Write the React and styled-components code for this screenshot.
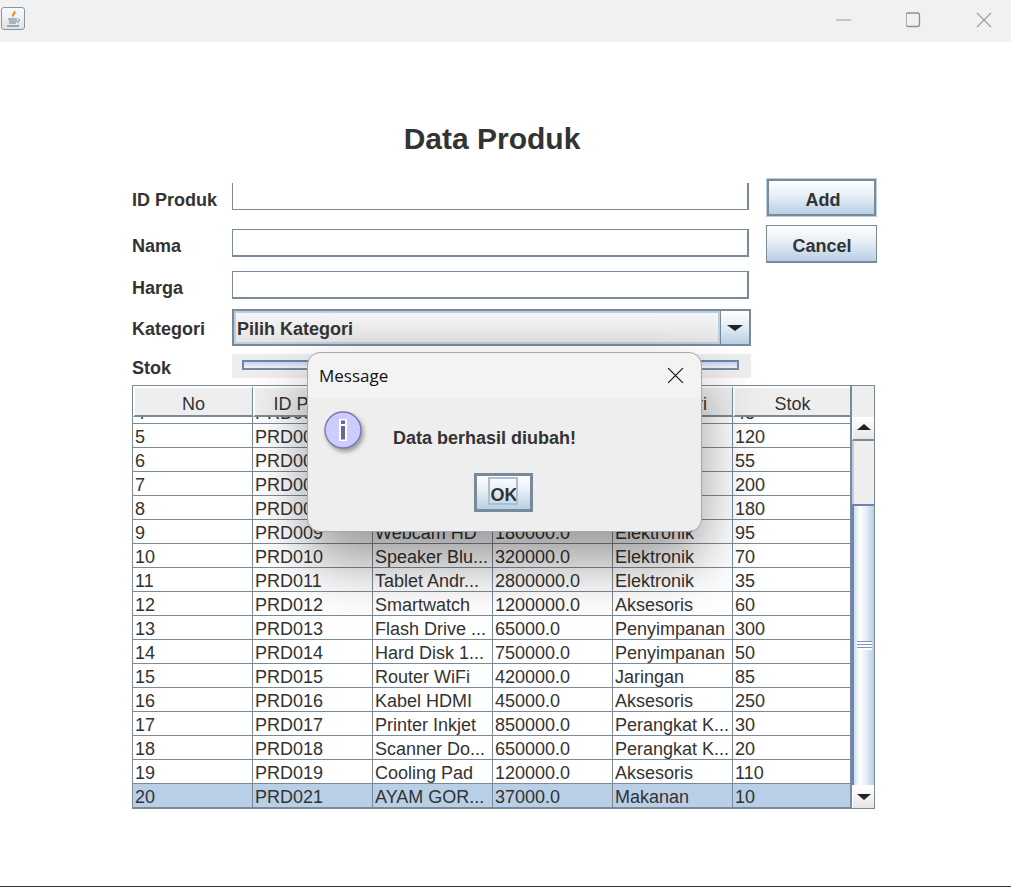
import React from "react";
import styled, { createGlobalStyle } from "styled-components";

const Global = createGlobalStyle`
  html, body { margin: 0; padding: 0; background: #fff; }
  * { box-sizing: border-box; }
`;

const SANS = `"Liberation Sans", Arial, sans-serif`;
const LINE = "#7a8a99";
const INK = "#333333";
const METAL = "linear-gradient(180deg, #ffffff 0%, #e6eef6 45%, #b8cfe5 100%)";

const Frame = styled.div`
  position: relative;
  width: 1011px;
  height: 887px;
  overflow: hidden;
  background: #fff;
  border-bottom: 1px solid #333;
  font-family: ${SANS};
  color: ${INK};
`;
const TitleBar = styled.div`
  height: 42px;
  background: #f1f1f1;
  display: flex;
  align-items: center;
  padding: 0 19px 0 1px;
`;
const AppIcon = styled.div`
  width: 24px;
  height: 23px;
  margin-top: -5px;
  border: 1px solid #7f98ad;
  border-radius: 3px;
  background: linear-gradient(180deg, #fbfbfb, #dfe3e6);
  display: flex;
  align-items: center;
  justify-content: center;
`;
const WinButtons = styled.div`
  margin-left: auto;
  display: flex;
  align-items: center;
  gap: 54px;
  margin-top: -3px;
`;
const Main = styled.div`
  width: 743px;
  margin-left: 132px;
`;
const Title = styled.h1`
  margin: 79px 0 0;
  height: 36px;
  font-size: 30px;
  line-height: 36px;
  font-weight: 700;
  text-align: center;
  color: ${INK};
  padding-right: 23px;
`;
const Form = styled.div`
  margin-top: 22px;
  display: grid;
  grid-template-columns: 100px 534px 1fr;
  grid-template-rows: 46px 41px 43px 45px 31px;
  align-items: start;
`;
const Label = styled.div`
  font-size: 18px;
  font-weight: 700;
  line-height: 20px;
  margin-top: ${p => p.$top}px;
`;
const TextField = styled.div`
  width: 517px;
  height: ${p => p.$open ? 27 : 28}px;
  margin-top: ${p => p.$top}px;
  border-style: solid;
  border-color: ${LINE};
  border-width: ${p => p.$open ? "0 2px 1px 1px" : "1px 2px 2px 1px"};
`;
const AddButton = styled.button`
  height: 37px;
  width: 109px;
  margin: 0 0 0 1px;
  font: 700 18px ${SANS};
  color: ${INK};
  background: ${METAL};
  border: 2px solid ${LINE};
  box-shadow: 0 0 0 1px #b8cfe5;
  padding: 5px 0 0 3px;
`;
const CancelButton = styled.button`
  height: 38px;
  width: 111px;
  margin: 0;
  font: 700 18px ${SANS};
  color: ${INK};
  background: ${METAL};
  border: 1px solid ${LINE};
  border-bottom-width: 2px;
  padding: 5px 0 0 1px;
`;
const Combo = styled.div`
  grid-column: 2 / 4;
  width: 519px;
  height: 37px;
  border: 2px solid ${LINE};
  display: flex;
`;
const ComboValue = styled.div`
  flex: 1;
  border: 2px solid #b8cfe5;
  background: linear-gradient(180deg, #f6f6f6, #e4e4e4);
  font-size: 18px;
  font-weight: 700;
  line-height: 33px;
  padding-left: 1px;
`;
const ComboArrow = styled.div`
  width: 29px;
  border-left: 1px solid ${LINE};
  background: ${METAL};
  display: flex;
  align-items: center;
  justify-content: center;
`;
const Triangle = styled.div`
  width: 0;
  height: 0;
  border-left: ${p => p.$w}px solid transparent;
  border-right: ${p => p.$w}px solid transparent;
  border-${p => p.$up ? "bottom" : "top"}: ${p => Math.round(p.$w * 0.8)}px solid #222;
`;
const SliderWrap = styled.div`
  grid-column: 2 / 4;
  width: 519px;
  height: 24px;
  background: #eeeeee;
  padding: 6px 12px 0 10px;
`;
const SliderTrack = styled.div`
  height: 10px;
  border: 2px solid ${LINE};
  border-top-color: #6b83b0;
  border-left-color: #6b83b0;
  background: linear-gradient(180deg, #c5d5ea, #f0f4f9);
`;
const Table = styled.div`
  height: 424px;
  border: 1px solid ${LINE};
  display: grid;
  grid-template-columns: 719px 1fr;
  grid-template-rows: 31px 1fr;
`;
const Head = styled.div`
  display: grid;
  grid-template-columns: 120px 120px 120px 120px 120px 117px;
  background: #fff;
  border-right: 2px solid ${LINE};
`;
const HeadCell = styled.div`
  height: 31px;
  font-size: 18px;
  line-height: 29px;
  padding-top: 2px;
  text-align: center;
  background: #eeeeee;
  border-style: solid;
  border-color: #fff ${LINE} ${LINE} #fff;
  border-width: 2px 1px 2px 2px;
  &:last-child { border-right: 0; }
`;
const Corner = styled.div`
  background: #eeeeee;
`;
const Rows = styled.div`
  height: 391px;
  overflow: hidden;
  display: flex;
  flex-direction: column;
  justify-content: flex-end;
  border-right: 2px solid ${LINE};
`;
const Row = styled.div`
  flex: none;
  height: 24px;
  display: grid;
  grid-template-columns: 120px 120px 120px 120px 120px 117px;
  border-bottom: 1px solid ${LINE};
  background: ${p => p.$selected ? "#b8cfe5" : "#fff"};
`;
const Cell = styled.div`
  font-size: 18px;
  line-height: 27px;
  padding-left: 2px;
  border-right: 1px solid ${LINE};
  white-space: nowrap;
  overflow: hidden;
  &:last-child { border-right: 0; }
`;
const ScrollBar = styled.div`
  display: flex;
  flex-direction: column;
`;
const ScrollButton = styled.div`
  height: ${p => p.$up ? 24 : 23}px;
  flex: none;
  padding-bottom: 2px;
  background: linear-gradient(180deg, #fff, #e6e6e6);
  border-left: 1px solid #fff;
  border-${p => p.$up ? "bottom" : "top"}: 2px solid ${p => p.$up ? LINE : "#fff"};
  display: flex;
  align-items: center;
  justify-content: center;
`;
const Track = styled.div`
  flex: 1;
  display: flex;
  flex-direction: column;
`;
const TrackTop = styled.div`
  height: 63px;
  flex: none;
  background: #eeeeee;
  border-left: 2px solid #b8cfe5;
`;
const Thumb = styled.div`
  flex: 1;
  border-top: 2px solid #6b83b0;
  border-left: 2px solid #6b83b0;
  background: linear-gradient(90deg, #cfdeee 0%, #ffffff 30%, #e6eef6 60%, #b8cfe5 100%);
  display: flex;
  align-items: center;
  justify-content: center;
`;
const Grip = styled.div`
  width: 15px;
  height: 9px;
  background: repeating-linear-gradient(180deg, #7c96c4 0 1px, #fff 1px 3px);
`;

const DialogShadow = styled.div`
  position: absolute;
  left: 308px;
  top: 353px;
  width: 393px;
  height: 178px;
  border-radius: 12px;
  box-shadow: 0 30px 60px rgba(0, 0, 0, 0.42);
`;
const Dialog = styled.div`
  position: absolute;
  left: 308px;
  top: 353px;
  width: 393px;
  height: 178px;
  border-radius: 12px;
  overflow: hidden;
  background: #eeeeee;
  outline: 1px solid #a8a8a8;
`;
const DialogTitle = styled.div`
  height: 44px;
  background: #f3f3f3;
  display: flex;
  align-items: center;
  justify-content: space-between;
  padding: 0 17px 0 11px;
  font: 400 17px "Open Sans", "Noto Sans", sans-serif;
  color: #111;
`;
const DialogBody = styled.div`
  display: grid;
  grid-template-columns: 69px 1fr;
  padding: 14px 0 0 16px;
`;
const InfoIcon = styled.div`
  width: 40px;
  height: 40px;
`;
const Message = styled.div`
  font-size: 18px;
  font-weight: 700;
  line-height: 20px;
  padding-top: 17px;
`;
const OkRow = styled.div`
  display: flex;
  justify-content: center;
  margin-top: 22px;
  padding-right: 3px;
`;
const OkButton = styled.button`
  width: 59px;
  height: 39px;
  padding: 0;
  border: 3px solid ${LINE};
  background: ${METAL};
  font: 700 18px ${SANS};
  color: ${INK};
  display: flex;
  align-items: center;
  justify-content: center;
`;
const OkLabel = styled.span`
  display: block;
  border: 2px solid #a9bfd4;
  width: 30px;
  height: 28px;
  line-height: 32px;
  margin: -3px 0 0 -1px;
  padding-left: 1px;
  text-align: left;
  overflow: hidden;
`;

const columns = ["No", "ID Produk", "Nama Produk", "Harga", "Kategori", "Stok"];
const data = [
  ["4", "PRD004", "Monitor LED", "1500000.0", "Elektronik", "45"],
  ["5", "PRD005", "Headset Ga...", "450000.0", "Aksesoris", "120"],
  ["6", "PRD006", "SSD 512GB", "850000.0", "Aksesoris", "55"],
  ["7", "PRD007", "RAM 8GB", "500000.0", "Komponen", "200"],
  ["8", "PRD008", "Mousepad", "90000.0", "Aksesoris", "180"],
  ["9", "PRD009", "Webcam HD", "180000.0", "Elektronik", "95"],
  ["10", "PRD010", "Speaker Blu...", "320000.0", "Elektronik", "70"],
  ["11", "PRD011", "Tablet Andr...", "2800000.0", "Elektronik", "35"],
  ["12", "PRD012", "Smartwatch", "1200000.0", "Aksesoris", "60"],
  ["13", "PRD013", "Flash Drive ...", "65000.0", "Penyimpanan", "300"],
  ["14", "PRD014", "Hard Disk 1...", "750000.0", "Penyimpanan", "50"],
  ["15", "PRD015", "Router WiFi", "420000.0", "Jaringan", "85"],
  ["16", "PRD016", "Kabel HDMI", "45000.0", "Aksesoris", "250"],
  ["17", "PRD017", "Printer Inkjet", "850000.0", "Perangkat K...", "30"],
  ["18", "PRD018", "Scanner Do...", "650000.0", "Perangkat K...", "20"],
  ["19", "PRD019", "Cooling Pad", "120000.0", "Aksesoris", "110"],
  ["20", "PRD021", "AYAM GOR...", "37000.0", "Makanan", "10"],
];

const JavaLogo = () => (
  <svg width="17" height="19" viewBox="0 0 17 19" fill="none">
    <path d="M9 1C10 3 7 4 7 6C7 7 8 8 8.5 8.5C8 7 9.5 6 10.5 4.5C11 3.5 10 2 9 1Z" fill="#ef8a2a" />
    <path d="M3 10h9M4 12h8M4 14h7M13 10c2 0 2 3-1 3" stroke="#66808f" strokeWidth="1" />
    <path d="M2 17h12" stroke="#66808f" strokeWidth="1.2" />
  </svg>
);

const MinIcon = () => (
  <svg width="16" height="16" viewBox="0 0 16 16"><path d="M0 8h15" stroke="#9a9a9a" strokeWidth="1" /></svg>
);
const MaxIcon = () => (
  <svg width="16" height="16" viewBox="0 0 16 16" fill="none"><rect x="0" y="1" width="13.5" height="13.5" rx="2" stroke="#8f8f8f" strokeWidth="1.3" /></svg>
);
const CloseIcon = ({ color = "#9a9a9a", size = 16 }) => (
  <svg width={size} height={size} viewBox="0 0 16 16"><path d="M1 1l14 14M15 1L1 15" stroke={color} strokeWidth="1.1" /></svg>
);
const Info = () => (
  <svg width="44" height="44" viewBox="0 0 44 44" style={{ filter: "drop-shadow(2px 3px 2px rgba(0,0,0,.35))" }}>
    <circle cx="19" cy="19" r="18" fill="#ccccff" stroke="#7b75b0" strokeWidth="1.4" />
    <rect x="15" y="8" width="8" height="22" fill="#fff" />
    <rect x="17" y="9.5" width="4" height="3.5" fill="#66669a" />
    <rect x="17" y="15" width="4" height="13.5" fill="#66669a" />
  </svg>
);

export default function App() {
  return (
    <Frame>
      <Global />
      <TitleBar>
        <AppIcon><JavaLogo /></AppIcon>
        <WinButtons><MinIcon /><MaxIcon /><CloseIcon /></WinButtons>
      </TitleBar>
      <Main>
        <Title>Data Produk</Title>
        <Form>
          <Label $top={11}>ID Produk</Label>
          <TextField $open $top={4} />
          <AddButton>Add</AddButton>
          <Label $top={11}>Nama</Label>
          <TextField $top={4} />
          <CancelButton>Cancel</CancelButton>
          <Label $top={12}>Harga</Label>
          <TextField $top={5} />
          <div />
          <Label $top={10}>Kategori</Label>
          <Combo>
            <ComboValue>Pilih Kategori</ComboValue>
            <ComboArrow><Triangle $w={8} /></ComboArrow>
          </Combo>
          <Label $top={4}>Stok</Label>
          <SliderWrap><SliderTrack /></SliderWrap>
        </Form>
        <Table>
          <Head>
            {columns.map(c => <HeadCell key={c}>{c}</HeadCell>)}
          </Head>
          <Corner />
          <Rows>
            {data.map(r => (
              <Row key={r[0]} $selected={r[0] === "20"}>
                {r.map((v, i) => <Cell key={i}>{v}</Cell>)}
              </Row>
            ))}
          </Rows>
          <ScrollBar>
            <ScrollButton $up><Triangle $up $w={7} /></ScrollButton>
            <Track>
              <TrackTop />
              <Thumb><Grip /></Thumb>
            </Track>
            <ScrollButton><Triangle $w={7} /></ScrollButton>
          </ScrollBar>
        </Table>
      </Main>
      <DialogShadow />
      <Dialog>
        <DialogTitle>Message<CloseIcon color="#111" size={17} /></DialogTitle>
        <DialogBody>
          <InfoIcon><Info /></InfoIcon>
          <Message>Data berhasil diubah!</Message>
        </DialogBody>
        <OkRow><OkButton><OkLabel>OK</OkLabel></OkButton></OkRow>
      </Dialog>
    </Frame>
  );
}
